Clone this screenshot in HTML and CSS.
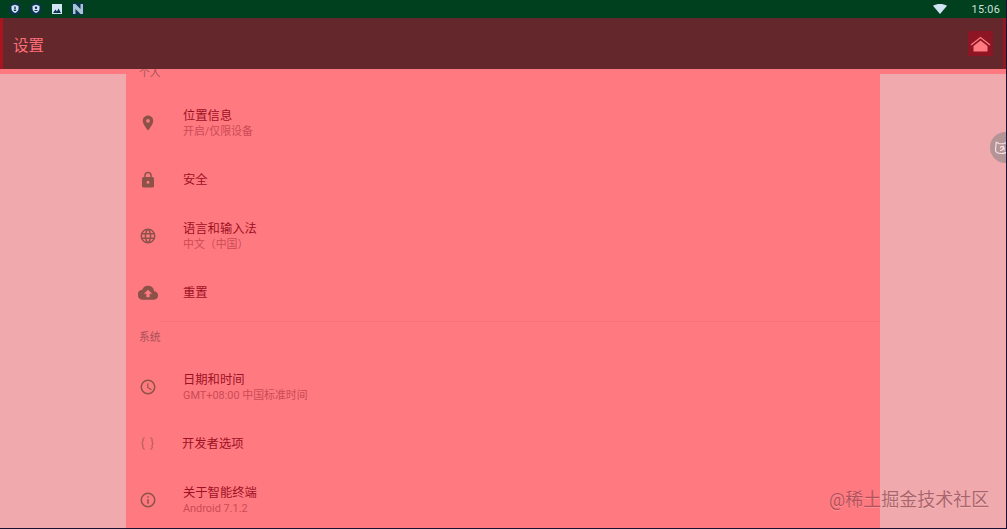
FILE: index.html
```html
<!DOCTYPE html>
<html lang="zh">
<head>
<meta charset="utf-8">
<title>设置</title>
<link rel="stylesheet" href="styles.css">
</head>
<body>
<div class="app">
  <header class="status">
    <div class="status-icons">
      <svg class="si" viewBox="0 0 12 12"><circle class="dark" cx="6" cy="6" r="6"/><path class="pale" d="M6 1.800 9.500 3v2.800c0 2-1.500 3.500-3.500 4.200-2-.7-3.500-2.200-3.500-4.200V3z"/><path class="dark" d="M5.300 3.500h1.400v2.700H5.300zM4.800 6.800h2.400v1.300H4.800z"/></svg>
      <svg class="si" viewBox="0 0 12 12"><circle class="dark" cx="6" cy="6" r="6"/><path class="pale" d="M6 1.800 9.500 3v2.800c0 2-1.500 3.500-3.500 4.200-2-.7-3.500-2.200-3.500-4.200V3z"/><circle class="dark" cx="6" cy="4.800" r="1.200"/><path class="dark" d="M4 8c.3-1.500 3.700-1.500 4 0z"/></svg>
      <svg class="si" viewBox="0 0 12 12"><path class="pale" d="M1 1h10v10H1z"/><path class="dark" d="m2 10 2.500-3.500 1.500 2 1.500-3 2.500 4.500z"/></svg>
      <svg class="si" viewBox="0 0 12 12"><path class="dark" d="M0 0h12v12H0z"/><path class="grey" d="M1 1h2.500l5 5V1H11v10H8.500l-5-5v5H1z"/></svg>
    </div>
    <div class="status-right">
      <svg class="wifi" viewBox="0 0 14 10"><path class="pale" d="M0 1.800C4-.6 10-.6 14 1.800L7 10z"/></svg>
      <span class="clock">15:06</span>
    </div>
  </header>
  <div class="appbar">
    <h1 class="title">设置</h1>
    <div class="home">
      <svg viewBox="0 0 25 25"><path class="home-roof" d="M3 14 12.500 6.500 22 14" /><path class="home-body" d="M5.500 15 12.500 9.500l7 5.500v5.500h-14z"/></svg>
    </div>
  </div>
  <main class="main">
    <div class="side"></div>
    <section class="list">
      <div class="label label-first">个人</div>
      <div class="row">
        <svg class="icon" viewBox="0 0 24 24"><path d="M12 2C8.100 2 5 5.100 5 9c0 5.300 7 13 7 13s7-7.700 7-13c0-3.900-3.100-7-7-7zm0 9.500A2.500 2.500 0 1 1 12 6.500a2.500 2.500 0 0 1 0 5z"/></svg>
        <div class="text"><div class="primary">位置信息</div><div class="secondary">开启/仅限设备</div></div>
      </div>
      <div class="row">
        <svg class="icon" viewBox="0 0 24 24"><path d="M18 8h-1V6A5 5 0 0 0 7 6v2H6a2 2 0 0 0-2 2v10a2 2 0 0 0 2 2h12a2 2 0 0 0 2-2V10a2 2 0 0 0-2-2zm-6 9a2 2 0 1 1 0-4 2 2 0 0 1 0 4zm3.100-9H8.900V6a3.100 3.100 0 0 1 6.200 0z"/></svg>
        <div class="text"><div class="primary">安全</div></div>
      </div>
      <div class="row">
        <svg class="icon" viewBox="0 0 24 24"><path d="M12 2a10 10 0 1 0 0 20 10 10 0 0 0 0-20zm6.900 6h-3a15.700 15.700 0 0 0-1.400-3.600A8 8 0 0 1 18.900 8zM12 4c.8 1.200 1.500 2.500 1.900 4h-3.800c.4-1.500 1.100-2.800 1.900-4zM4.300 14a8.300 8.300 0 0 1 0-4h3.400a16 16 0 0 0 0 4zm.8 2h3a15.700 15.700 0 0 0 1.400 3.600A8 8 0 0 1 5.100 16zm3-8h-3a8 8 0 0 1 4.400-3.600A15.700 15.700 0 0 0 8.100 8zM12 20c-.8-1.200-1.500-2.500-1.900-4h3.800c-.4 1.500-1.100 2.800-1.900 4zm2.300-6H9.700a14.700 14.700 0 0 1 0-4h4.600a14.700 14.700 0 0 1 0 4zm.2 5.600c.6-1.100 1.100-2.300 1.400-3.600h3a8 8 0 0 1-4.400 3.600zm1.800-5.600a16.500 16.500 0 0 0 0-4h3.400a8.300 8.300 0 0 1 0 4z"/></svg>
        <div class="text"><div class="primary">语言和输入法</div><div class="secondary">中文（中国）</div></div>
      </div>
      <div class="row">
        <svg class="icon icon-cloud" viewBox="0 0 24 24"><path d="M19.400 10A7.500 7.500 0 0 0 5 8a6 6 0 0 0 1 12h13a5 5 0 0 0 .4-10zM14 13v4h-4v-4H7l5-5 5 5z"/></svg>
        <div class="text"><div class="primary">重置</div></div>
      </div>
      <div class="divider"></div>
      <div class="label">系统</div>
      <div class="row">
        <svg class="icon" viewBox="0 0 24 24"><path d="M12 2a10 10 0 1 0 0 20 10 10 0 0 0 0-20zm0 18a8 8 0 1 1 0-16 8 8 0 0 1 0 16zm.5-13H11v6l5.200 3.200.8-1.300-4.500-2.700z"/></svg>
        <div class="text"><div class="primary">日期和时间</div><div class="secondary">GMT+08:00 中国标准时间</div></div>
      </div>
      <div class="row">
        <svg class="icon icon-thin" viewBox="0 0 24 24"><path d="M8 4c-2 0-2.500 1-2.500 2.500v3c0 1.300-.6 2-1.800 2.500 1.200.5 1.800 1.200 1.800 2.500v3C5.500 19 6 20 8 20M16 4c2 0 2.500 1 2.500 2.500v3c0 1.300.6 2 1.800 2.500-1.200.5-1.800 1.200-1.800 2.500v3c0 1.500-.5 2.500-2.500 2.500"/></svg>
        <div class="text"><div class="primary">开发者选项</div></div>
      </div>
      <div class="row">
        <svg class="icon" viewBox="0 0 24 24"><path d="M12 2a10 10 0 1 0 0 20 10 10 0 0 0 0-20zm0 18a8 8 0 1 1 0-16 8 8 0 0 1 0 16zm-1-9h2v6h-2zm0-4h2v2h-2z"/></svg>
        <div class="text"><div class="primary">关于智能终端</div><div class="secondary">Android 7.1.2</div></div>
      </div>
    </section>
    <div class="side"></div>
  </main>
  <div class="bubble">
    <svg viewBox="0 0 20 20"><path d="M3 3l4 2h6l4-2 1 10c0 3-3 5-8 5s-8-2-8-5z"/><path d="M8 14c3 0 5-2 4-6M8.500 11a2.500 2.500 0 0 1 5 0v3"/></svg>
  </div>
  <div class="watermark">@稀土掘金技术社区</div>
</div>
</body>
</html>
```
FILE: styles.css
```css
* { box-sizing: border-box; }
html, body { margin: 0; height: 100%; overflow: hidden; }
body { font-family: Roboto, "Noto Sans CJK SC", sans-serif; background: #1c1030; }
.app { position: relative; width: 1006px; height: 528px; overflow: hidden; display: flex; flex-direction: column; background: #ff7a80; }

.status { flex: none; height: 18px; background: #00401f; display: flex; justify-content: space-between; align-items: center; padding: 0 6px 0 9px; position: relative; z-index: 3; }
.status-icons { display: flex; align-items: center; gap: 9px; }
.si { width: 12px; height: 12px; display: block; }
.pale { fill: #d3e4f4; }
.dark { fill: #0b3350; }
.grey { fill: #a8c4d4; }
.status-right { display: flex; align-items: center; gap: 25px; }
.wifi { width: 14px; height: 10px; display: block; }
.clock { color: #cfe0dc; font-size: 10.800px; letter-spacing: .3px; }

.appbar { flex: none; height: 51px; background: #63272c; border-left: 3px solid #a8151f; border-right: 3px solid #8e1a24; display: flex; justify-content: space-between; align-items: center; padding: 0 10px 0 10px; position: relative; z-index: 2; }
.title { margin: 0; font-size: 15.500px; font-weight: 400; color: #ff6f78; }
.home { width: 25px; height: 25px; background: #8e1524; }
.home svg { width: 25px; height: 25px; display: block; }
.home-roof { fill: none; stroke: #ff7a80; stroke-width: 1.300; }
.home-body { fill: #ff7a80; }

.main { flex: 1; min-height: 0; display: grid; grid-template-columns: 126px 754px 126px; }
.side { background: #f0a9ac; border-top: 5px solid #ff7a80; }
.list { overflow: hidden; }
.label { height: 37px; padding: 9px 0 0 13px; font-size: 10.800px; line-height: 14px; color: #a8505a; }
.label-first { height: 30px; margin-top: -4px; padding-top: 2px; }
.row { height: 56.500px; display: flex; align-items: center; padding-left: 13px; }
.icon { width: 18px; height: 18px; fill: #8c5248; flex: none; }
.icon-cloud { width: 20px; height: 20px; margin: 0 -1px; }
.icon-thin { fill: none; stroke: #8c5248; stroke-width: 1.200; width: 17px; height: 17px; }
.text { margin-left: 26px; }
.primary { font-size: 12.300px; line-height: 16px; color: #9e1024; }
.secondary { font-size: 10.900px; line-height: 14px; color: #cc4a56; margin-top: 1px; }
.divider { height: 1px; margin-left: 34px; background: #f7717a; }

.bubble { position: absolute; left: 990px; top: 132px; width: 31px; height: 31px; border-radius: 50%; background: #b59497; padding: 7px 0 0 4px; }
.bubble svg { display: block; width: 15px; height: 17px; fill: none; stroke: #f4e4e4; stroke-width: 1.500; }
.watermark { position: absolute; left: 829px; top: 489px; font-size: 18px; line-height: 22px; color: rgba(125, 50, 62, .62); text-shadow: 0 1px 0 rgba(255, 255, 255, .18); }
```
